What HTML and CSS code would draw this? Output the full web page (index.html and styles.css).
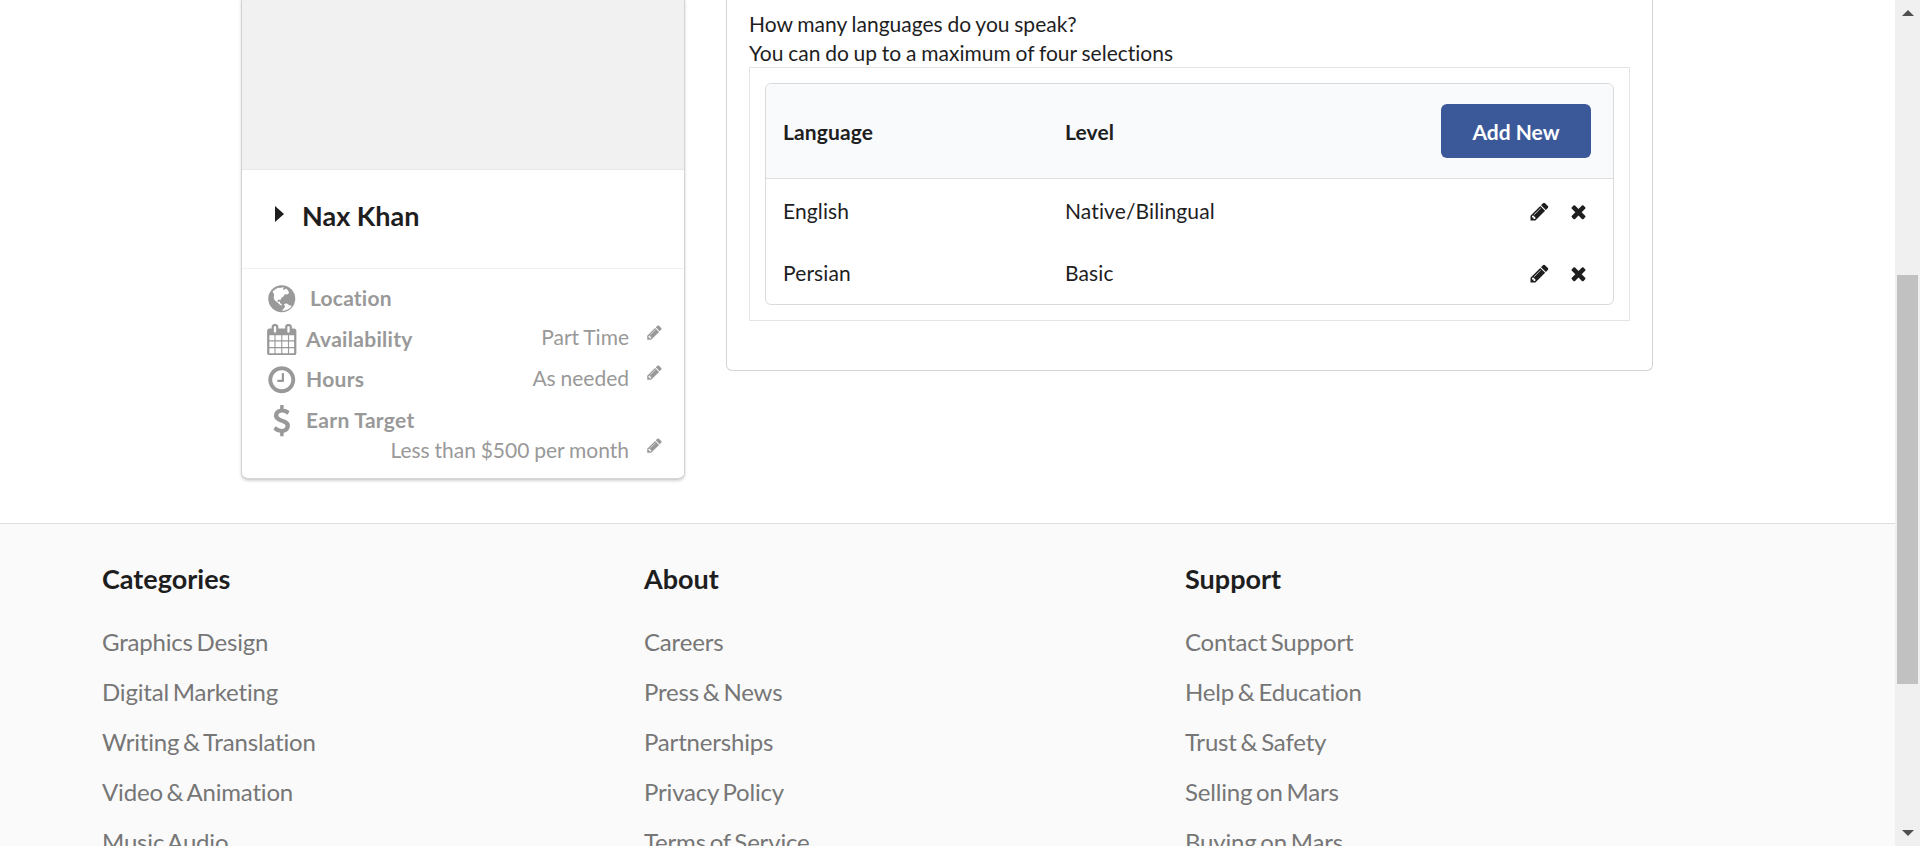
FILE: index.html
```html
<!DOCTYPE html>
<html lang="en">
<head>
<meta charset="utf-8">
<title>Profile</title>
<link rel="stylesheet" href="styles.css">
</head>
<body>
<svg class="sprite" aria-hidden="true">
  <symbol id="pencil" viewBox="0 0 1792 1792"><path d="M491 1536l91-91-235-235-91 91v107h128v128h107zm523-928q0-22-22-22-10 0-17 7l-542 542q-7 7-7 17 0 22 22 22 10 0 17-7l542-542q7-7 7-17zm-54-192l416 416-832 832h-416v-416zm683 96q0 53-37 90l-166 166-416-416 166-165q36-38 90-38 53 0 91 38l235 234q37 39 37 91z"/></symbol>
  <symbol id="times" viewBox="0 0 1792 1792"><path d="M1490 1322q0 40-28 68l-136 136q-28 28-68 28t-68-28l-294-294-294 294q-28 28-68 28t-68-28l-136-136q-28-28-28-68t28-68l294-294-294-294q-28-28-28-68t28-68l136-136q28-28 68-28t68 28l294 294 294-294q28-28 68-28t68 28l136 136q28 28 28 68t-28 68l-294 294 294 294q28 28 28 68z"/></symbol>
  <symbol id="calendar" viewBox="0 0 1792 1792"><path d="M192 1664h288v-288h-288v288zm352 0h320v-288h-320v288zm-352-352h288v-320h-288v320zm352 0h320v-320h-320v320zm-352-384h288v-288h-288v288zm736 736h320v-288h-320v288zm-384-736h320v-288h-320v288zm768 736h288v-288h-288v288zm-384-352h320v-320h-320v320zm-352-864v-288q0-13-9.500-22.500t-22.500-9.500h-64q-13 0-22.500 9.500t-9.500 22.500v288q0 13 9.500 22.500t22.500 9.500h64q13 0 22.500-9.500t9.500-22.500zm736 864h288v-320h-288v320zm-384-384h320v-288h-320v288zm384 0h288v-288h-288v288zm32-480v-288q0-13-9.500-22.500t-22.500-9.500h-64q-13 0-22.500 9.500t-9.500 22.500v288q0 13 9.500 22.500t22.500 9.500h64q13 0 22.500-9.500t9.500-22.500zm384-64v1280q0 52-38 90t-90 38h-1408q-52 0-90-38t-38-90v-1280q0-52 38-90t90-38h128v-96q0-66 47-113t113-47h64q66 0 113 47t47 113v96h384v-96q0-66 47-113t113-47h64q66 0 113 47t47 113v96h128q52 0 90 38t38 90z"/></symbol>
  <symbol id="clock" viewBox="0 0 1792 1792"><path d="M1024 544v448q0 14-9 23t-23 9h-320q-14 0-23-9t-9-23v-64q0-14 9-23t23-9h224v-352q0-14 9-23t23-9h64q14 0 23 9t9 23zm416 352q0-148-73-273t-198-198-273-73-273 73-198 198-73 273 73 273 198 198 273 73 273-73 198-198 73-273zm224 0q0 209-103 385.500t-279.500 279.500-385.500 103-385.500-103-279.500-279.500-103-385.500 103-385.500 279.500-279.500 385.500-103 385.500 103 279.500 279.500 103 385.500z"/></symbol>
  <symbol id="dollar" viewBox="0 0 1792 1792"><path d="M1362 1185q0 153-99.500 263.500t-258.500 136.500v175q0 14-9 23t-23 9h-135q-13 0-22.500-9.500t-9.500-22.500v-175q-66-9-127.500-31t-101.500-44.500-74-48-46.500-37.500-17.500-18q-17-21-2-41l103-135q7-10 23-12 15-2 24 9l2 2q113 99 243 125 37 8 74 8 81 0 142.500-43t61.500-122q0-28-15-53t-33.500-42-58.500-37.500-66-32-80-32.500q-39-16-61.500-25t-61.500-26.500-62.500-31-56.500-35.500-53.500-42.500-43.500-49-35.500-58-21-66.500-8.500-78q0-138 98-242t255-134v-180q0-13 9.500-22.500t22.500-9.500h135q14 0 23 9t9 23v176q57 6 110.500 23t87 33.500 63.500 37.500 39 29 15 14q17 18 5 38l-81 146q-8 15-23 16-14 3-27-7-3-3-14.500-12t-39-26.500-58.500-32-74.500-26-85.500-11.500q-95 0-155 43t-60 111q0 26 8.500 48t29.500 41.500 39.500 33 56 31 60.500 27 70 27.500q53 20 81 31.500t76 35 75.500 42.500 62 50 53 63.500 31.500 76.500 13 94z"/></symbol>
  <symbol id="globe" viewBox="0 0 31.500 31.500"><circle cx="15.750" cy="15.750" r="13.500"/><path class="land" d="M6.600 8.600L9 6.400l3-1.600 2.600.2 1.400-.7 2.200.4-1.500 1.400 1.200.9 2.200-1.400 2 1.900 1 2.400-2 1.600-2.200-.2-1.500 2.200-2.300 1.700-.6 1.900-2-.7-1.200 1.700 1.100 1 1.400-.5.300 1.600 1.500.9.200 1.600-2.200-1.100-2.300-2.300-2.400-1.700-1.200-2.600.4-3.400zM18 21.200l2.400-1 2.600 1.800 2.600 1-1.200 1.700-2.700 1.900-3.700 1.200-2.300-.2 1.600-1.400 1.800-2.400z"/></symbol>
</svg>
<div class="window">
  <div class="page">
    <main class="profile">
      <section class="card">
        <div class="photo"></div>
        <div class="name">
          <svg class="caret" viewBox="0 0 9 16"><path d="M0 0v16l9-8z"/></svg>
          <span>Nax Khan</span>
        </div>
        <div class="details">
          <div class="row location"><svg class="icon"><use href="#globe"/></svg><b>Location</b></div>
          <div class="row"><svg class="icon"><use href="#calendar"/></svg><b>Availability</b><span class="value">Part Time</span><svg class="edit"><use href="#pencil"/></svg></div>
          <div class="row"><svg class="icon"><use href="#clock"/></svg><b>Hours</b><span class="value">As needed</span><svg class="edit"><use href="#pencil"/></svg></div>
          <div class="row"><svg class="icon"><use href="#dollar"/></svg><b>Earn Target</b></div>
          <div class="row target"><span class="value">Less than $500 per month</span><svg class="edit"><use href="#pencil"/></svg></div>
        </div>
      </section>
      <section class="panel">
        <p class="question">How many languages do you speak?<br>You can do up to a maximum of four selections</p>
        <div class="segment">
          <div class="table">
            <div class="line head"><b>Language</b><b>Level</b><button class="add">Add New</button></div>
            <div class="line"><span>English</span><span>Native/Bilingual</span><span class="actions"><svg><use href="#pencil"/></svg><svg><use href="#times"/></svg></span></div>
            <div class="line"><span>Persian</span><span>Basic</span><span class="actions"><svg><use href="#pencil"/></svg><svg><use href="#times"/></svg></span></div>
          </div>
        </div>
      </section>
    </main>
    <footer class="footer">
      <div class="column"><h3>Categories</h3><a>Graphics Design</a><a>Digital Marketing</a><a>Writing &amp; Translation</a><a>Video &amp; Animation</a><a>Music Audio</a></div>
      <div class="column"><h3>About</h3><a>Careers</a><a>Press &amp; News</a><a>Partnerships</a><a>Privacy Policy</a><a>Terms of Service</a></div>
      <div class="column"><h3>Support</h3><a>Contact Support</a><a>Help &amp; Education</a><a>Trust &amp; Safety</a><a>Selling on Mars</a><a>Buying on Mars</a></div>
    </footer>
  </div>
  <aside class="scrollbar">
    <svg class="arrow" viewBox="0 0 12 6"><path d="M0 6h12L6 0z"/></svg>
    <div class="thumb"></div>
    <svg class="arrow" viewBox="0 0 12 6"><path d="M0 0h12L6 6z"/></svg>
  </aside>
</div>
</body>
</html>
```
FILE: styles.css
```css
* { box-sizing: border-box; }
body { margin: 0; font-family: Lato, "Liberation Sans", sans-serif; font-size: 21px; line-height: 30px; font-variant-ligatures: none; color: #1e1e1f; background: #fff; }
.sprite { display: none; }
.window { display: flex; height: 846px; overflow: hidden; }
.page { width: 1895px; height: 846px; overflow: hidden; }
.profile { display: flex; align-items: flex-start; height: 523px; padding-left: 241px; gap: 41px; }
.card { width: 444px; height: 480px; border: 1px solid #d4d4d5; border-width: 0 1px 2px 1px; border-radius: 0 0 7px 7px; box-shadow: 0 1px 3px #d4d4d5; display: flex; flex-direction: column; }
.photo { height: 170px; background: #f1f1f1; border-bottom: 1px solid #e8e8e8; }
.name { height: 99px; display: flex; align-items: center; border-bottom: 1px solid #f0f0f0; padding: 0 0 10px 33px; font-size: 27px; font-weight: 700; }
.name span { margin-left: 18px; padding-top: 4px; }
.caret { width: 9px; height: 16px; fill: #1e1e1f; }
.details { padding: 14px 21px 0 24px; color: #999; }
.row { display: flex; height: 40.7px; align-items: flex-start; }
.icon { width: 31.5px; height: 31.5px; fill: #999; flex: none; }
.row b { margin: 0 0 0 8.500px; font-weight: 700; letter-spacing: .3px; }
.location b { margin-left: 12.500px; letter-spacing: .2px; }
.value { margin: -1.500px 0 0 auto; word-spacing: -.6px; }
.edit { width: 17px; height: 17px; margin: 0 0 0 17px; fill: #999; flex: none; }
.target { height: 30px; margin-top: -9px; }
.land { fill: #fff; }
.panel { width: 927px; height: 371px; padding: 9px 22px 0; border: 1px solid #d4d4d5; border-top: 0; border-radius: 0 0 6px 6px; }
.question { margin: 0; line-height: 29px; word-spacing: -.6px; }
.segment { border: 1px solid #e3e4e5; height: 254px; padding: 15px; }
.table { height: 222px; border: 1px solid #d9dadb; border-radius: 6px; overflow: hidden; }
.line { display: grid; grid-template-columns: 282px 1fr 180px; align-items: center; height: 62px; padding: 2px 22px 0 17px; letter-spacing: .12px; }
.head { height: 95px; padding-top: 0; background: #f9fafb; border-bottom: 1px solid #dedfdf; }
.head b { padding-top: 2px; }
.add { justify-self: end; width: 150px; height: 54px; border: 0; border-radius: 6px; padding: 1px 0 0; background: #3b5998; color: #fff; font: 700 21px/30px Lato, "Liberation Sans", sans-serif; }
.actions { display: flex; justify-content: flex-end; gap: 18px; padding-right: 2px; }
.actions svg { width: 21px; height: 21px; fill: #1e1e1f; }
.footer { height: 323px; background: #fafafa; border-top: 1px solid #dedede; padding: 38px 0 0 102px; display: grid; grid-template-columns: 542px 541px 541px; align-content: start; }
.column { display: flex; flex-direction: column; }
.column h3 { margin: 0 0 24px; font-size: 27px; line-height: 34px; }
.column a { height: 50px; font-size: 24px; line-height: 44px; color: #767676; letter-spacing: -.18px; word-spacing: -2.2px; }
.scrollbar { width: 25px; height: 846px; background: #f0f0f0; display: flex; flex-direction: column; align-items: center; padding: 10px 0; }
.arrow { width: 12px; height: 6px; fill: #505050; flex: none; }
.thumb { width: 21px; height: 409px; margin: 259px 0 146px; background: #c1c1c1; }
```
